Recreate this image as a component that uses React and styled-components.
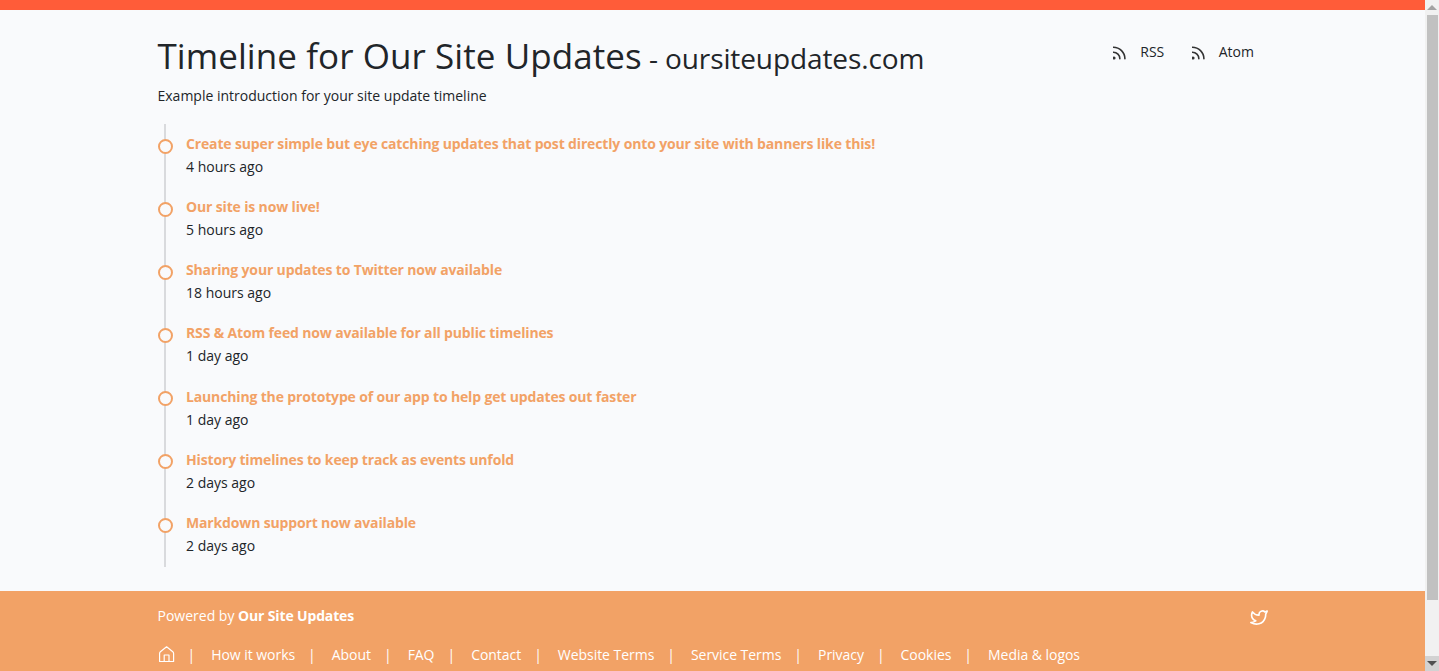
import React from 'react'
import styled, { createGlobalStyle } from 'styled-components'

const GlobalStyle = createGlobalStyle`
  html, body { height: 100%; overflow: hidden; }
  body {
    margin: 0;
    background: #f9fafc;
    color: #212529;
    font-family: "Open Sans", "Noto Sans", sans-serif;
    font-size: 14px;
  }
`

const Window = styled.div`
  display: flex;
  height: 100vh;
`
const Page = styled.div`
  flex: 1;
  min-width: 0;
  overflow: hidden;
`
const Scrollbar = styled.div`
  display: flex;
  flex-direction: column;
  width: 14px;
  background: #f1f1f1;
`
const ScrollButton = styled.div`
  display: flex;
  align-items: center;
  justify-content: center;
  flex: none;
  height: 15px;
  background: ${props => props.$active ? '#d2d2d2' : '#f1f1f1'};
`
const Arrow = styled.span`
  width: 0;
  height: 0;
  border-left: 5px solid transparent;
  border-right: 5px solid transparent;
  ${props => props.$down
    ? 'border-top: 5px solid #505050;'
    : 'border-bottom: 5px solid #a3a3a3;'}
`
const Thumb = styled.div`
  height: 585px;
  margin: 0 1px 0 2px;
  background: #c1c1c1;
`
const Track = styled.div`
  flex: 1;
`
const TopBar = styled.div`
  height: 10px;
  background: #ff5c39;
`
const Container = styled.div`
  width: 1110px;
  margin: 0 auto;
`
const Header = styled.header`
  display: flex;
  justify-content: space-between;
  align-items: flex-start;
  padding-top: 24px;
`
const Title = styled.h1`
  margin: 0;
  font-size: 35px;
  line-height: 44px;
  font-weight: 400;
  letter-spacing: 0.07px;
`
const Domain = styled.span`
  margin-left: -2px;
  font-size: 28px;
  letter-spacing: -0.1px;
`
const Feeds = styled.nav`
  display: flex;
  gap: 27.5px;
  padding-top: 8px;
  margin-right: 13.5px;
`
const Feed = styled.a`
  display: flex;
  align-items: center;
  gap: 14px;
  font-size: 14px;
  line-height: 20px;
`
const Intro = styled.p`
  margin: 5px 0 0;
  font-size: 14px;
  line-height: 22px;
`
const Timeline = styled.ul`
  list-style: none;
  margin: 17px 0 24px 6.5px;
  padding: 8px 0 0;
  height: 435px;
  border-left: 2px solid #d9dadd;
`
const Item = styled.li`
  position: relative;
  padding-left: 20px;
  height: 63.17px;
`
const Dot = styled.span`
  position: absolute;
  left: -8.5px;
  top: 6.6px;
  width: 15px;
  height: 15px;
  box-sizing: border-box;
  border: 2px solid #f2a266;
  border-radius: 50%;
  background: #f9fafc;
`
const ItemTitle = styled.a`
  display: block;
  font-weight: 700;
  font-size: 14px;
  line-height: 23px;
  letter-spacing: -0.15px;
  color: #f2a266;
`
const ItemTime = styled.div`
  font-size: 14px;
  line-height: 23px;
`
const Footer = styled.footer`
  background: #f2a266;
  color: #fff;
  height: 100px;
  padding-top: 12px;
  font-size: 14px;
`
const FooterTop = styled.div`
  display: flex;
  justify-content: space-between;
  align-items: center;
  height: 24px;
  b { letter-spacing: -0.15px; }
  svg { margin-top: 5px; }
`
const FooterLinks = styled.div`
  display: flex;
  align-items: center;
  margin-top: 16px;
  height: 22px;
  letter-spacing: -0.04px;
`
const FooterLink = styled.a`
  display: flex;
  align-items: center;
  &:not(:last-child)::after {
    content: '|';
    margin: 0 16px 0 13px;
  }
`

const items = [
  ['Create super simple but eye catching updates that post directly onto your site with banners like this!', '4 hours ago'],
  ['Our site is now live!', '5 hours ago'],
  ['Sharing your updates to Twitter now available', '18 hours ago'],
  ['RSS & Atom feed now available for all public timelines', '1 day ago'],
  ['Launching the prototype of our app to help get updates out faster', '1 day ago'],
  ['History timelines to keep track as events unfold', '2 days ago'],
  ['Markdown support now available', '2 days ago'],
]

const links = ['How it works', 'About', 'FAQ', 'Contact', 'Website Terms', 'Service Terms', 'Privacy', 'Cookies', 'Media & logos']

const RssIcon = () => (
  <svg width="13" height="15" viewBox="3.500 1 18 20.700" fill="none" stroke="#333" strokeWidth="2.200" strokeLinecap="round">
    <circle cx="5" cy="19" r="1" />
    <path d="M4 4a16 16 0 0 1 16 16" />
    <path d="M4 11a9 9 0 0 1 9 9" />
  </svg>
)

const HomeIcon = () => (
  <svg width="17" height="18" viewBox="0 0 17 18" fill="none" stroke="#fff" strokeWidth="1.200" strokeLinecap="round" strokeLinejoin="round">
    <path d="M1.600 8.500Q1.600 7.500 2.400 6.800L8.600 1.800L14.800 6.800Q15.600 7.500 15.600 8.500V16.500H1.600Z" />
    <path d="M6.200 16.500V10H11V16.500" />
  </svg>
)

const TwitterIcon = () => (
  <svg width="18" height="16" viewBox="1 3 22 19" fill="none" stroke="#fff" strokeWidth="2" strokeLinecap="round" strokeLinejoin="round">
    <path d="M22 4.010c-1 .49-1.980 .689-3 .99c-1.121-1.265-2.783-1.335-4.380-.737s-2.643 2.060-2.620 3.737v1c-3.245 .083-6.135-1.395-8-4c0 0-4.182 7.433 4 11c-1.872 1.247-3.739 2.088-6 2c3.308 1.803 6.913 2.423 10.034 1.517c3.580-1.040 6.522-3.723 7.651-7.742a13.840 13.840 0 0 0 .497-3.753c-.002-.249 1.510-2.772 1.818-4.013z" />
  </svg>
)

export default function App() {
  return (
    <Window>
      <GlobalStyle />
      <Page>
        <TopBar />
        <Container>
          <Header>
            <div>
              <Title>Timeline for Our Site Updates <Domain>- oursiteupdates.com</Domain></Title>
              <Intro>Example introduction for your site update timeline</Intro>
            </div>
            <Feeds>
              <Feed><RssIcon />RSS</Feed>
              <Feed><RssIcon />Atom</Feed>
            </Feeds>
          </Header>
          <Timeline>
            {items.map(([title, time]) => (
              <Item key={title}>
                <Dot />
                <ItemTitle>{title}</ItemTitle>
                <ItemTime>{time}</ItemTime>
              </Item>
            ))}
          </Timeline>
        </Container>
        <Footer>
          <Container>
            <FooterTop>
              <span>Powered by <b>Our Site Updates</b></span>
              <TwitterIcon />
            </FooterTop>
            <FooterLinks>
              <FooterLink><HomeIcon /></FooterLink>
              {links.map(l => <FooterLink key={l}>{l}</FooterLink>)}
            </FooterLinks>
          </Container>
        </Footer>
      </Page>
      <Scrollbar>
        <ScrollButton><Arrow /></ScrollButton>
        <Thumb />
        <Track />
        <ScrollButton $active><Arrow $down /></ScrollButton>
      </Scrollbar>
    </Window>
  )
}
